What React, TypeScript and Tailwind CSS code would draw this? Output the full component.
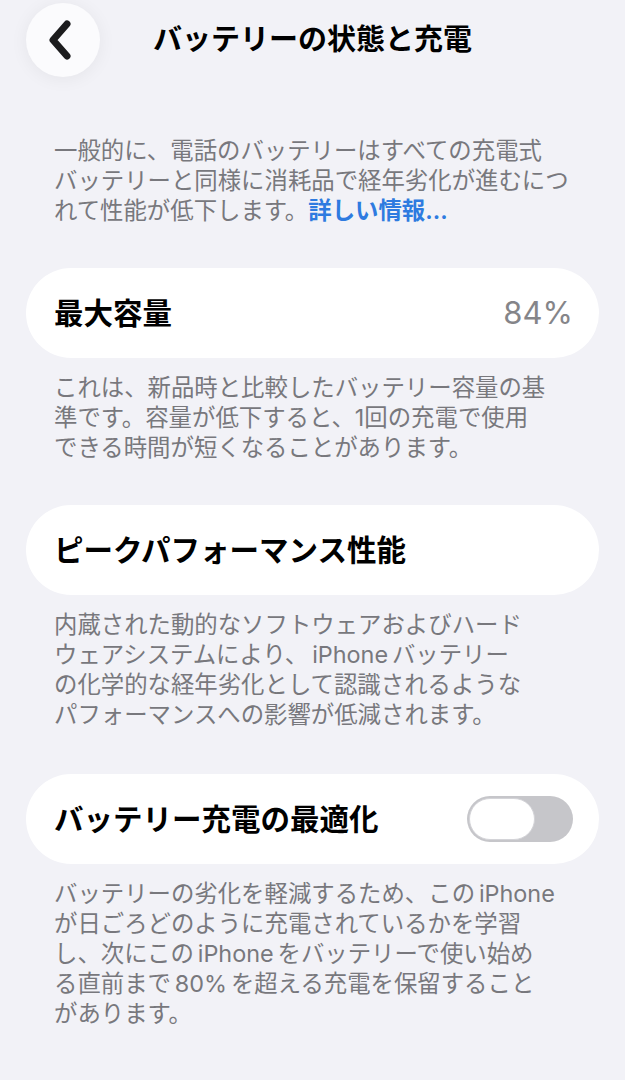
import { ReactNode } from "react";

const font = { fontFamily: '"Inter", "Noto Sans CJK JP", sans-serif' };

const intro = [
  "一般的に、電話のバッテリーはすべての充電式",
  "バッテリーと同様に消耗品で経年劣化が進むにつ",
];

const capacityNote = [
  "これは、新品時と比較したバッテリー容量の基",
  "準です。容量が低下すると、1回の充電で使用",
  "できる時間が短くなることがあります。",
];

// \u2006 gives the narrow gap iOS puts between Japanese and Latin runs
const performanceNote = [
  "内蔵された動的なソフトウェアおよびハード",
  "ウェアシステムにより、\u2006iPhone\u2006バッテリー",
  "の化学的な経年劣化として認識されるような",
  "パフォーマンスへの影響が低減されます。",
];

const chargingNote = [
  "バッテリーの劣化を軽減するため、この\u2006iPhone",
  "が日ごろどのように充電されているかを学習",
  "し、次にこの\u2006iPhone\u2006をバッテリーで使い始め",
  "る直前まで\u200680%\u2006を超える充電を保留すること",
  "があります。",
];

const Footnote = ({ lines, children }: { lines: string[]; children?: ReactNode }) => (
  <div className="mt-[15px] px-[54px] text-[23.4px] leading-[30px] text-[#78787d]">
    {lines.map((line) => (
      <div key={line} className="whitespace-nowrap">
        {line}
      </div>
    ))}
    {children}
  </div>
);

const Row = ({ label, right, className }: { label: string; right?: ReactNode; className: string }) => (
  <div
    className={`mx-[26px] flex h-[90px] items-center justify-between rounded-full bg-white pl-[28px] pr-[26px] ${className}`}
  >
    <span className="text-[29.5px] font-semibold text-black">{label}</span>
    {right}
  </div>
);

const Toggle = () => (
  <div className="flex h-[46px] w-[106px] items-center rounded-full bg-[#c6c6ca] p-[2px]">
    <div className="h-[42px] w-[66px] rounded-full border border-[#d4d4d8] bg-white" />
  </div>
);

const App = () => {
  return (
    <div className="min-h-screen w-full bg-[#f2f2f7] pb-10" style={font}>
      <header className="grid grid-cols-[1fr_auto_1fr] items-center pt-[3px]">
        <div className="pl-[26px]">
          <button className="flex h-[74px] w-[74px] items-center justify-center rounded-full bg-[#fbfbfd] pr-[6px] shadow-[0_2px_18px_rgba(0,0,0,0.06)]">
            <svg width="30" height="44" viewBox="0 0 30 44" fill="none">
              <polyline
                points="22,6 8,22 22,38"
                stroke="#1c1c1e"
                strokeWidth="7"
                strokeLinecap="round"
                strokeLinejoin="round"
              />
            </svg>
          </button>
        </div>
        <h1 className="text-[29px] font-bold text-black">バッテリーの状態と充電</h1>
        <div />
      </header>

      <div className="mt-[59px]">
        <Footnote lines={intro}>
          <div className="whitespace-nowrap">
            れて性能が低下します。
            <span className="font-semibold text-[#2e7be0]">詳しい情報...</span>
          </div>
        </Footnote>
      </div>

      <Row
        className="mt-[42px]"
        label="最大容量"
        right={<span className="text-[31px] text-[#858589]">84%</span>}
      />
      <Footnote lines={capacityNote} />

      <Row className="mt-[42px]" label="ピークパフォーマンス性能" />
      <Footnote lines={performanceNote} />

      <Row className="mt-[44px]" label="バッテリー充電の最適化" right={<Toggle />} />
      <Footnote lines={chargingNote} />
    </div>
  );
};

export default App;
